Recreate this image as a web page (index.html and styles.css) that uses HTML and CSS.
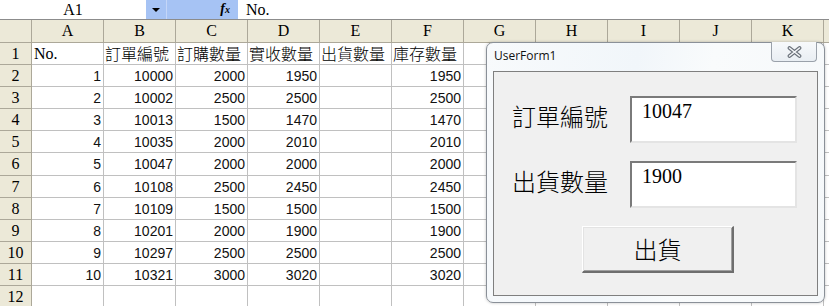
FILE: index.html
```html
<!DOCTYPE html>
<html>
<head>
<meta charset="utf-8">
<link rel="stylesheet" href="styles.css">
</head>
<body>
<div class="fbar">
  <div class="namebox">A1</div>
  <div class="ddbtn"><span class="tri"></span></div>
  <div class="fxbtn"><span class="fx">f<span class="fxx">x</span></span></div>
  <div class="finput">No.</div>
</div>
<div class="sheet">
  <div class="h corner"></div><div class="h">A</div><div class="h">B</div><div class="h">C</div><div class="h">D</div><div class="h">E</div><div class="h">F</div><div class="h">G</div><div class="h">H</div><div class="h">I</div><div class="h">J</div><div class="h">K</div><div class="h last"></div>

  <div class="rh">1</div><div class="c t lat">No.</div><div class="c t">訂單編號</div><div class="c t">訂購數量</div><div class="c t">實收數量</div><div class="c t">出貨數量</div><div class="c t">庫存數量</div><div class="c"></div><div class="c"></div><div class="c"></div><div class="c"></div><div class="c"></div><div class="c last"></div>

  <div class="rh">2</div><div class="c n">1</div><div class="c n">10000</div><div class="c n">2000</div><div class="c n">1950</div><div class="c"></div><div class="c n">1950</div><div class="c"></div><div class="c"></div><div class="c"></div><div class="c"></div><div class="c"></div><div class="c last"></div>

  <div class="rh">3</div><div class="c n">2</div><div class="c n">10002</div><div class="c n">2500</div><div class="c n">2500</div><div class="c"></div><div class="c n">2500</div><div class="c"></div><div class="c"></div><div class="c"></div><div class="c"></div><div class="c"></div><div class="c last"></div>

  <div class="rh">4</div><div class="c n">3</div><div class="c n">10013</div><div class="c n">1500</div><div class="c n">1470</div><div class="c"></div><div class="c n">1470</div><div class="c"></div><div class="c"></div><div class="c"></div><div class="c"></div><div class="c"></div><div class="c last"></div>

  <div class="rh">5</div><div class="c n">4</div><div class="c n">10035</div><div class="c n">2000</div><div class="c n">2010</div><div class="c"></div><div class="c n">2010</div><div class="c"></div><div class="c"></div><div class="c"></div><div class="c"></div><div class="c"></div><div class="c last"></div>

  <div class="rh">6</div><div class="c n">5</div><div class="c n">10047</div><div class="c n">2000</div><div class="c n">2000</div><div class="c"></div><div class="c n">2000</div><div class="c"></div><div class="c"></div><div class="c"></div><div class="c"></div><div class="c"></div><div class="c last"></div>

  <div class="rh">7</div><div class="c n">6</div><div class="c n">10108</div><div class="c n">2500</div><div class="c n">2450</div><div class="c"></div><div class="c n">2450</div><div class="c"></div><div class="c"></div><div class="c"></div><div class="c"></div><div class="c"></div><div class="c last"></div>

  <div class="rh">8</div><div class="c n">7</div><div class="c n">10109</div><div class="c n">1500</div><div class="c n">1500</div><div class="c"></div><div class="c n">1500</div><div class="c"></div><div class="c"></div><div class="c"></div><div class="c"></div><div class="c"></div><div class="c last"></div>

  <div class="rh">9</div><div class="c n">8</div><div class="c n">10201</div><div class="c n">2000</div><div class="c n">1900</div><div class="c"></div><div class="c n">1900</div><div class="c"></div><div class="c"></div><div class="c"></div><div class="c"></div><div class="c"></div><div class="c last"></div>

  <div class="rh">10</div><div class="c n">9</div><div class="c n">10297</div><div class="c n">2500</div><div class="c n">2500</div><div class="c"></div><div class="c n">2500</div><div class="c"></div><div class="c"></div><div class="c"></div><div class="c"></div><div class="c"></div><div class="c last"></div>

  <div class="rh">11</div><div class="c n">10</div><div class="c n">10321</div><div class="c n">3000</div><div class="c n">3020</div><div class="c"></div><div class="c n">3020</div><div class="c"></div><div class="c"></div><div class="c"></div><div class="c"></div><div class="c"></div><div class="c last"></div>

  <div class="rh">12</div><div class="c"></div><div class="c"></div><div class="c"></div><div class="c"></div><div class="c"></div><div class="c"></div><div class="c"></div><div class="c"></div><div class="c"></div><div class="c"></div><div class="c"></div><div class="c last"></div>
</div>

<div class="form">
  <div class="titlebar">
    <span class="title">UserForm1</span>
    <div class="closebtn">
      <svg width="15" height="12" viewBox="0 0 15 12">
        <path d="M2.5 2 L12.5 10 M12.5 2 L2.5 10" stroke="#6a717a" stroke-width="3.8" stroke-linecap="round" fill="none"/>
        <path d="M2.5 2 L12.5 10 M12.5 2 L2.5 10" stroke="#f4f6f8" stroke-width="1.6" stroke-linecap="round" fill="none"/>
      </svg>
    </div>
  </div>
  <div class="client">
    <div class="frow">
      <div class="flabel">訂單編號</div>
      <div class="fbox">10047</div>
    </div>
    <div class="frow">
      <div class="flabel">出貨數量</div>
      <div class="fbox">1900</div>
    </div>
    <div class="fbtn">出貨</div>
  </div>
</div>
</body>
</html>
```

FILE: styles.css
```css
html, body {
  margin: 0;
  padding: 0;
  background: #ffffff;
  overflow: hidden;
}
body {
  width: 829px;
  height: 306px;
  position: relative;
  font-family: "Liberation Serif", "Noto Sans CJK TC", serif;
  color: #000;
}
.fbar {
  display: flex;
  height: 19px;
  border-bottom: 1px solid #8c8c8c;
  background: #fff;
}
.namebox {
  width: 146px;
  text-align: center;
  font-size: 16px;
  line-height: 19px;
  font-family: "Liberation Serif", serif;
}
.ddbtn {
  width: 20px;
  background: #a6c3f4;
  display: flex;
  align-items: center;
  justify-content: center;
  border-right: 1px solid #c4d6f8;
}
.tri {
  width: 0;
  height: 0;
  border-left: 4px solid transparent;
  border-right: 4px solid transparent;
  border-top: 4px solid #000;
  margin-top: 1px;
}
.fxbtn {
  width: 71px;
  background: #a6c3f4;
  display: flex;
  justify-content: flex-end;
  align-items: center;
  padding-right: 8px;
  box-sizing: border-box;
}
.fx {
  font-family: "Liberation Serif", serif;
  font-style: italic;
  font-size: 14px;
  font-weight: bold;
  line-height: 14px;
}
.fxx {
  font-size: 10px;
}
.finput {
  padding-left: 8px;
  font-size: 16px;
  line-height: 19px;
  font-family: "Liberation Serif", serif;
}

.sheet {
  display: grid;
  grid-template-columns: 32px repeat(11, 72px) 5px;
  grid-template-rows: 23px 22px 22px 22px 22px 22px 23px 22px 22px 22px 22px 22px 22px;
}
.sheet > div {
  box-sizing: border-box;
  border-right: 1px solid #c0c0c0;
  border-bottom: 1px solid #c0c0c0;
  white-space: nowrap;
}
.sheet > .last {
  border-right: none;
}
.sheet > .h {
  background: #ece9d8;
  border-right-color: #aca899;
  border-bottom-color: #aca899;
  text-align: center;
  font-family: "Liberation Serif", serif;
  font-size: 16px;
  line-height: 22px;
}
.sheet > .rh {
  background: #ece9d8;
  border-right-color: #aca899;
  border-bottom-color: #aca899;
  text-align: center;
  font-family: "Liberation Serif", serif;
  font-size: 16px;
  line-height: 22px;
}
.c.t {
  font-family: "Noto Sans CJK TC", sans-serif;
  font-weight: 300;
  font-size: 16px;
  line-height: 20px;
  padding-left: 1px;
}
.c.t.lat {
  font-family: "Liberation Serif", serif;
  font-weight: normal;
  padding-left: 2px;
  line-height: 22px;
}
.c.n {
  text-align: right;
  padding-right: 2px;
  font-family: "Liberation Sans", sans-serif;
  font-size: 14px;
  line-height: 22px;
  color: #111;
}

.form {
  position: absolute;
  left: 486px;
  top: 42px;
  width: 339px;
  height: 261px;
  box-sizing: border-box;
  border: 1px solid #8a9098;
  border-radius: 7px;
  background: linear-gradient(100deg, #f8fafc 0%, #f1f6fa 40%, #f9fbfc 60%, #f5f8fa 100%);
  box-shadow: 0 0 3px rgba(0,0,0,0.25);
  padding: 0 6px 6px 6px;
  display: flex;
  flex-direction: column;
}
.titlebar {
  height: 28px;
  position: relative;
  flex: none;
}
.title {
  position: absolute;
  left: 1px;
  top: 5px;
  font-family: "Open Sans", "Noto Sans", sans-serif;
  font-size: 12px;
  line-height: 16px;
  color: #111;
}
.closebtn {
  position: absolute;
  left: 278px;
  top: -1px;
  width: 46px;
  height: 20px;
  box-sizing: border-box;
  border: 1px solid #9aa1aa;
  border-top: none;
  border-radius: 0 0 4px 4px;
  background: linear-gradient(#f7f9fb, #e9eef3);
  display: flex;
  align-items: center;
  justify-content: center;
}
.client {
  flex: 1;
  background: #f0f0f0;
  border: 1px solid #7f7f7f;
  padding: 24px 0 0 18px;
  box-sizing: border-box;
}
.frow {
  display: flex;
  margin-bottom: 18px;
}
.flabel {
  width: 118px;
  font-family: "Noto Sans CJK TC", sans-serif;
  font-weight: 300;
  font-size: 24px;
  line-height: 24px;
  margin-top: 8px;
}
.fbox {
  width: 167px;
  height: 47px;
  box-sizing: border-box;
  background: #fff;
  border-top: 2px solid #7a7a7a;
  border-left: 2px solid #7a7a7a;
  border-right: 2px solid #e4e4e4;
  border-bottom: 2px solid #e4e4e4;
  font-family: "Liberation Serif", serif;
  font-size: 20px;
  line-height: 20px;
  padding: 3px 10px;
}
.fbtn {
  margin-top: 7px;
  margin-left: 70px;
  width: 152px;
  height: 47px;
  box-sizing: border-box;
  background: #f0f0f0;
  border-top: 1px solid #ffffff;
  border-left: 1px solid #ffffff;
  border-right: 2px solid #6e6e6e;
  border-bottom: 2px solid #6e6e6e;
  box-shadow: inset 1px 1px 0 #e3e3e3, inset -1px -1px 0 #a0a0a0;
  display: flex;
  align-items: center;
  justify-content: center;
  font-family: "Noto Sans CJK TC", sans-serif;
  font-weight: 300;
  font-size: 24px;
  line-height: 24px;
}
```
